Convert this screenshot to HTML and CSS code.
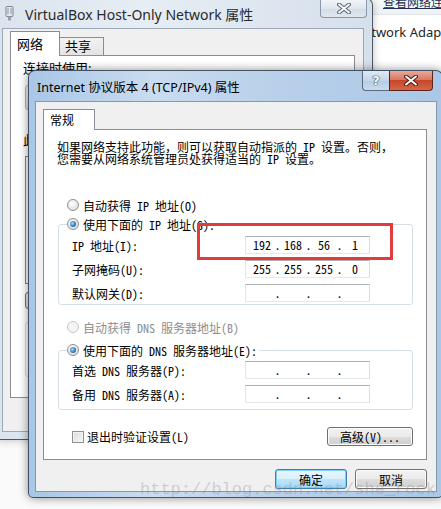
FILE: index.html
```html
<!DOCTYPE html>
<html lang="zh-CN">
<head>
    <meta charset="UTF-8">
    <title>Internet 协议版本 4 (TCP/IPv4) 属性</title>
    <link rel="stylesheet" href="styles.css">
</head>
<body>
    <div class="desktop">
        <!-- window further behind, right side -->
        <div class="win-other">
            <div class="other-head"><span class="other-link">查看网络连接</span></div>
            <div class="other-text">Network Adapter #2</div>
        </div>

        <!-- VirtualBox adapter properties (inactive) -->
        <div class="win win-back">
            <div class="titlebar">
                <svg class="app-icon" width="9" height="15" viewBox="0 0 9 15">
                    <rect x="1" y="0.5" width="7" height="10" rx="1" fill="#e4e8ec" stroke="#7b8590"/>
                    <rect x="2.5" y="2" width="1" height="6" fill="#8a949e"/>
                    <rect x="5.5" y="2" width="1" height="6" fill="#8a949e"/>
                    <rect x="3" y="10.5" width="3" height="4" fill="#9aa3ac"/>
                </svg>
                <span class="title">VirtualBox Host-Only Network 属性</span>
                <div class="caption">
                    <div class="cap cap-close inactive">
                        <svg width="14" height="11" viewBox="0 0 14 11">
                            <path d="M2 1.5 L12 9.5 M12 1.5 L2 9.5" stroke="#5f6b78" stroke-width="4" stroke-linecap="round"/>
                            <path d="M2 1.5 L12 9.5 M12 1.5 L2 9.5" stroke="#f4f6f8" stroke-width="2" stroke-linecap="round"/>
                        </svg>
                    </div>
                </div>
            </div>
            <div class="body back-body">
                <div class="tabs back-tabs">
                    <div class="tab active">网络</div>
                    <div class="tab">共享</div>
                </div>
                <div class="panel back-panel">
                    <div class="bp-label">连接时使用:</div>
                    <div class="bp-adapter"></div>
                    <div class="bp-label bp-gap">此连接使用下列项目(O):</div>
                    <div class="bp-list"></div>
                    <div class="bp-button"></div>
                    <div class="bp-desc"></div>
                </div>
            </div>
        </div>

        <!-- TCP/IPv4 properties (active) -->
        <div class="win win-front">
            <div class="titlebar">
                <span class="title">Internet 协议版本 4 (TCP/IPv4) 属性</span>
                <div class="caption">
                    <div class="cap cap-help">?</div>
                    <div class="cap cap-close">
                        <svg width="14" height="11" viewBox="0 0 14 11">
                            <path d="M2 1.5 L12 9.5 M12 1.5 L2 9.5" stroke="#4a1c14" stroke-width="4" stroke-linecap="round"/>
                            <path d="M2 1.5 L12 9.5 M12 1.5 L2 9.5" stroke="#ffffff" stroke-width="2" stroke-linecap="round"/>
                        </svg>
                    </div>
                </div>
            </div>
            <div class="body front-body ui">
                <div class="tabs">
                    <div class="tab active">常规</div>
                </div>
                <div class="panel">
                    <div class="desc">如果网络支持此功能，则可以获取自动指派的 IP 设置。否则，<br>您需要从网络系统管理员处获得适当的 IP 设置。</div>

                    <div class="radio-row first">
                        <span class="radio"></span>
                        <span>自动获得 IP 地址(O)</span>
                    </div>

                    <fieldset class="group group-ip">
                        <legend class="radio-row">
                            <span class="radio checked"></span>
                            <span>使用下面的 IP 地址(S):</span>
                        </legend>
                        <div class="rows">
                            <div class="field-row">
                                <span class="field-label">IP 地址(I):</span>
                                <div class="ip">
                                    <span class="seg">192</span><span class="dot">.</span><span class="seg">168</span><span class="dot">.</span><span class="seg">56</span><span class="dot">.</span><span class="seg">1</span>
                                </div>
                            </div>
                            <div class="field-row">
                                <span class="field-label">子网掩码(U):</span>
                                <div class="ip">
                                    <span class="seg">255</span><span class="dot">.</span><span class="seg">255</span><span class="dot">.</span><span class="seg">255</span><span class="dot">.</span><span class="seg">0</span>
                                </div>
                            </div>
                            <div class="field-row">
                                <span class="field-label">默认网关(D):</span>
                                <div class="ip">
                                    <span class="seg"></span><span class="dot">.</span><span class="seg"></span><span class="dot">.</span><span class="seg"></span><span class="dot">.</span><span class="seg"></span>
                                </div>
                            </div>
                        </div>
                    </fieldset>

                    <div class="radio-row dns-auto disabled">
                        <span class="radio"></span>
                        <span>自动获得 DNS 服务器地址(B)</span>
                    </div>

                    <fieldset class="group group-dns">
                        <legend class="radio-row">
                            <span class="radio checked"></span>
                            <span>使用下面的 DNS 服务器地址(E):</span>
                        </legend>
                        <div class="rows">
                            <div class="field-row">
                                <span class="field-label">首选 DNS 服务器(P):</span>
                                <div class="ip">
                                    <span class="seg"></span><span class="dot">.</span><span class="seg"></span><span class="dot">.</span><span class="seg"></span><span class="dot">.</span><span class="seg"></span>
                                </div>
                            </div>
                            <div class="field-row">
                                <span class="field-label">备用 DNS 服务器(A):</span>
                                <div class="ip">
                                    <span class="seg"></span><span class="dot">.</span><span class="seg"></span><span class="dot">.</span><span class="seg"></span><span class="dot">.</span><span class="seg"></span>
                                </div>
                            </div>
                        </div>
                    </fieldset>

                    <div class="check-row">
                        <label class="check">
                            <span class="checkbox"></span>
                            <span>退出时验证设置(L)</span>
                        </label>
                        <button class="btn btn-adv">高级(V)...</button>
                    </div>
                </div>
                <div class="actions">
                    <button class="btn btn-default">确定</button>
                    <button class="btn">取消</button>
                </div>
            </div>
        </div>

        <!-- red annotation box and blog watermark -->
        <div class="mark"></div>
        <div class="watermark">http://blog.csdn.net/she_rock</div>
    </div>
</body>
</html>
```

FILE: styles.css
```css
/* Basic Styles */
* {
    box-sizing: border-box;
}
body {
    margin: 0;
    background: #fff;
}
.desktop {
    position: relative;
    width: 441px;
    height: 509px;
    overflow: hidden;
    background: #fafafa;
    font-family: "Noto Sans", "Noto Sans CJK SC", sans-serif;
    color: #000;
}

/* Window behind, right edge */
.win-other {
    position: absolute;
    left: 330px;
    top: -6px;
    width: 140px;
    height: 130px;
    background: #fff;
}
.other-head {
    height: 21px;
    padding-left: 53px;
    border-bottom: 1px solid #dfe4ea;
    background: linear-gradient(#fdfdfd, #eef2f6);
    white-space: nowrap;
    line-height: 14px;
}
.other-link {
    font-size: 12px;
    color: #1f2f4f;
    text-decoration: underline;
}
.other-text {
    padding: 8px 0 0 24px;
    font-size: 13px;
    line-height: 18px;
    color: #1e1e1e;
    white-space: nowrap;
}

/* Window frames */
.win {
    position: absolute;
    display: flex;
    flex-direction: column;
    border: 1px solid rgba(30, 40, 55, 0.75);
    border-radius: 7px 7px 5px 5px;
}
.win-back {
    left: -6px;
    top: -2px;
    width: 379px;
    height: 442px;
    padding: 0 8px 7px 7px;
    background: linear-gradient(90deg, #dbe4ee, #e6edf4 40%, #d6e0eb);
    box-shadow: 0 0 8px rgba(0, 0, 0, 0.25);
}
.win-front {
    left: 28px;
    top: 70px;
    width: 415px;
    height: 428px;
    padding: 0 5px 5px 6px;
    background: linear-gradient(90deg, #a9c6e6, #c9dcf0 30%, #b9d0ea 60%, #aac7e7);
    box-shadow: 0 0 10px rgba(0, 0, 0, 0.45);
}
.titlebar {
    display: flex;
    align-items: flex-start;
    flex-shrink: 0;
}
.win-back .titlebar {
    height: 29px;
}
.win-front .titlebar {
    height: 30px;
}
.title {
    align-self: center;
    white-space: nowrap;
}
.win-back .title {
    font-size: 14px;
    color: #2a2a2a;
}
.app-icon {
    align-self: center;
    margin: 0 11px 0 3px;
}
.win-front .title {
    margin-left: 2px;
    font-size: 12.5px;
}
.caption {
    display: flex;
    margin-left: auto;
}
.win-back .caption {
    margin: 1px -3px 0 auto;
}
.win-front .caption {
    margin-right: 4px;
}
.cap {
    display: flex;
    align-items: center;
    justify-content: center;
    height: 20px;
    border: 1px solid #5b6b7e;
    border-top: none;
}
.cap-help {
    width: 27px;
    border-right: none;
    border-radius: 0 0 0 4px;
    background: linear-gradient(#dfe9f5, #c4d6eb 50%, #b5cbe5 51%, #c9dbef);
    color: #fff;
    font-family: "DejaVu Sans", sans-serif;
    font-size: 13px;
    font-weight: bold;
    text-shadow: 0 0 1px #2d3a4a, 0 0 1px #2d3a4a, 0 0 1px #2d3a4a;
}
.cap-close {
    width: 44px;
    border-radius: 0 0 4px 0;
    border-color: #5e2418;
    background: linear-gradient(#e9a99a, #d77a63 45%, #c7472b 50%, #d4664a);
}
.cap-close.inactive {
    width: 47px;
    height: 18px;
    border-color: #8a97a6;
    border-radius: 0 0 4px 4px;
    background: linear-gradient(#f1f4f8, #dfe6ee 50%, #d2dbe6 51%, #e0e7ef);
}

/* Window body */
.body {
    flex: 1;
    display: flex;
    flex-direction: column;
    background: #f0f0f0;
}
.back-body {
    padding: 2px 8px 33px 7px;
    border: 1px solid #9aa8b8;
}
.front-body {
    padding: 7px 9px 0 7px;
    border: 1px solid #8797ab;
}
.ui {
    font-family: "Noto Sans Mono CJK SC", "Noto Sans CJK SC", monospace;
    font-size: 12px;
}

/* Tabs */
.tabs {
    display: flex;
    align-items: flex-end;
    height: 21px;
    margin-bottom: -1px;
    position: relative;
    z-index: 1;
}
.tab {
    height: 21px;
    padding-left: 6px;
    border: 1px solid #898c95;
    border-bottom: none;
    background: #fff;
    line-height: 20px;
    width: 52px;
}
.back-tabs {
    height: 25px;
    font-size: 13px;
}
.back-tabs .tab {
    width: 50px;
    height: 25px;
    line-height: 24px;
}
.back-tabs .tab:not(.active) {
    width: 44px;
    height: 18px;
    margin-bottom: 1px;
    padding-left: 5px;
    border-left: none;
    line-height: 17px;
    background: linear-gradient(#f3f3f3, #e3e3e3);
}
.panel {
    border: 1px solid #898c95;
    background: #fff;
}
.front-body .panel {
    height: 331px;
    padding: 11px 13px 0 13px;
}

/* Back panel (mostly covered) */
.back-panel {
    flex: 1;
    padding: 4px 12px 0 12px;
}
.bp-label {
    font-size: 13px;
    line-height: 17px;
    white-space: nowrap;
}
.bp-gap {
    margin-top: 22px;
}
.bp-adapter {
    height: 25px;
    margin: 8px 0 0 2px;
    border: 1px solid #b5b5b5;
    border-radius: 3px;
    background: linear-gradient(#f6f6f6, #e4e4e4);
}
.bp-list {
    height: 128px;
    margin: 7px 0 0 2px;
    border: 1px solid #828790;
}
.bp-button {
    width: 80px;
    height: 17px;
    margin: 8px 0 0 2px;
    border: 1px solid #707070;
    border-radius: 3px;
    background: linear-gradient(#f2f2f2, #dcdcdc);
}
.bp-desc {
    height: 55px;
    margin: 13px 0 0 2px;
    border: 1px solid #d5dfe5;
    border-radius: 3px;
}

/* Form content */
.desc {
    line-height: 12px;
    white-space: nowrap;
}
.radio-row {
    display: flex;
    align-items: center;
    gap: 4px;
    height: 16px;
    margin-left: 10px;
    white-space: nowrap;
}
.radio-row.first {
    margin-top: 32px;
}
.radio-row.disabled {
    color: #8d8d8d;
}
.dns-auto {
    margin-top: 14px;
}
.radio {
    position: relative;
    width: 12px;
    height: 12px;
    border: 1px solid #8e8f8f;
    border-radius: 50%;
    background: radial-gradient(circle at 40% 35%, #ffffff, #e2e2e2 70%, #cfcfcf);
    flex-shrink: 0;
}
.disabled .radio {
    border-color: #c6c6c6;
    background: #f4f4f4;
}
.radio.checked::after {
    content: "";
    position: absolute;
    left: 2px;
    top: 2px;
    width: 6px;
    height: 6px;
    border-radius: 50%;
    background: radial-gradient(circle at 40% 40%, #a9dcfa, #2f74bb 60%, #173f73);
}
.group {
    width: 355px;
    margin: 3px 0 0 1px;
    padding: 0 13px 2px 13px;
    border: 1px solid #d5dfe5;
    border-radius: 3px;
    min-width: 0;
}
.group-dns {
    margin-top: 7px;
    padding-bottom: 6px;
}
.group legend {
    margin-left: -5px;
    padding: 0 2px 0 0;
}
.rows {
    display: flex;
    flex-direction: column;
    gap: 6px;
    margin-top: 4px;
}
.group-dns .rows {
    margin-top: 3px;
}
.field-row {
    display: flex;
    align-items: center;
    height: 18px;
}
.field-label {
    width: 173px;
    white-space: nowrap;
}
.ip {
    display: flex;
    width: 125px;
    height: 18px;
    padding-left: 2px;
    border: 1px solid;
    border-color: #abadb3 #dbdfe6 #e3e9ef #e2e3ea;
    background: #fff;
    line-height: 16px;
}
.seg {
    width: 28px;
    text-align: center;
}
.dot {
    display: flex;
    justify-content: center;
    width: 3px;
}

/* Checkbox row */
.check-row {
    display: flex;
    align-items: center;
    justify-content: space-between;
    margin-top: 17px;
}
.check {
    display: flex;
    align-items: center;
    gap: 3px;
    margin-left: 15px;
}
.checkbox {
    width: 12px;
    height: 12px;
    border: 1px solid #8e8f8f;
    background: linear-gradient(135deg, #d8d8d8, #fafafa);
    box-shadow: inset 0 0 0 1px #f4f4f4;
}

/* Buttons */
.btn {
    height: 19px;
    padding: 0;
    border: 1px solid #707070;
    border-radius: 3px;
    background: linear-gradient(#f2f2f2, #ebebeb 50%, #dddddd 51%, #cfcfcf);
    font: inherit;
    color: #000;
    box-shadow: inset 0 0 0 1px #fcfcfc;
}
.btn-adv {
    width: 86px;
}
.actions {
    display: flex;
    justify-content: flex-end;
    gap: 8px;
    margin-top: 9px;
}
.actions .btn {
    width: 72px;
    height: 20px;
}
.btn-default {
    border-color: #3c7fb1;
    background: linear-gradient(#eaf6fd, #d9f0fc 50%, #bee6fd 51%, #a7d9f5);
    box-shadow: inset 0 0 0 1px #7ed0f5;
}

/* Overlays */
.mark {
    position: absolute;
    left: 197px;
    top: 223px;
    width: 196px;
    height: 37px;
    border: 3px solid #e23b3b;
}
.watermark {
    position: absolute;
    left: 140px;
    top: 480px;
    font-family: "Liberation Mono", monospace;
    font-size: 17px;
    line-height: 20px;
    color: rgba(140, 140, 140, 0.35);
    white-space: nowrap;
}
```
